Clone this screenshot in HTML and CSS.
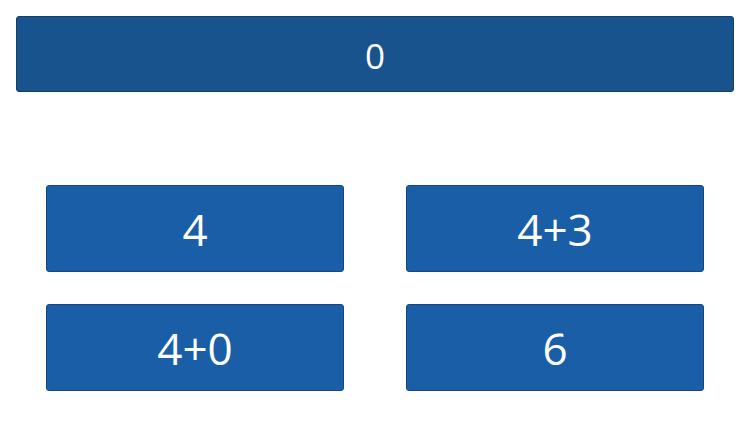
FILE: index.html
```html
<!DOCTYPE html>
<html>
<head>
<meta charset="utf-8">
<link rel="stylesheet" href="styles.css">
</head>
<body>
<div class="page">
  <div class="display">0</div>
  <div class="grid">
    <div class="btn">4</div>
    <div class="btn">4+3</div>
    <div class="btn">4+0</div>
    <div class="btn">6</div>
  </div>
</div>
</body>
</html>
```
FILE: styles.css
```css
html, body {
  margin: 0;
  padding: 0;
  background: #ffffff;
  font-family: "Open Sans", "Noto Sans", sans-serif;
}
.page {
  padding: 16px;
}
.display {
  height: 72px;
  padding-top: 2px;
  background: #18538e;
  border: 1px solid #123f6c;
  border-radius: 3px;
  color: #ffffff;
  font-size: 35px;
  display: flex;
  align-items: center;
  justify-content: center;
}
.grid {
  margin: 93px 30px 0;
  display: grid;
  grid-template-columns: 1fr 1fr;
  column-gap: 62px;
  row-gap: 32px;
}
.btn {
  height: 85px;
  background: #1a5ea7;
  border: 1px solid #144780;
  border-radius: 3px;
  color: #ffffff;
  font-size: 44px;
  display: flex;
  align-items: center;
  justify-content: center;
}
```
